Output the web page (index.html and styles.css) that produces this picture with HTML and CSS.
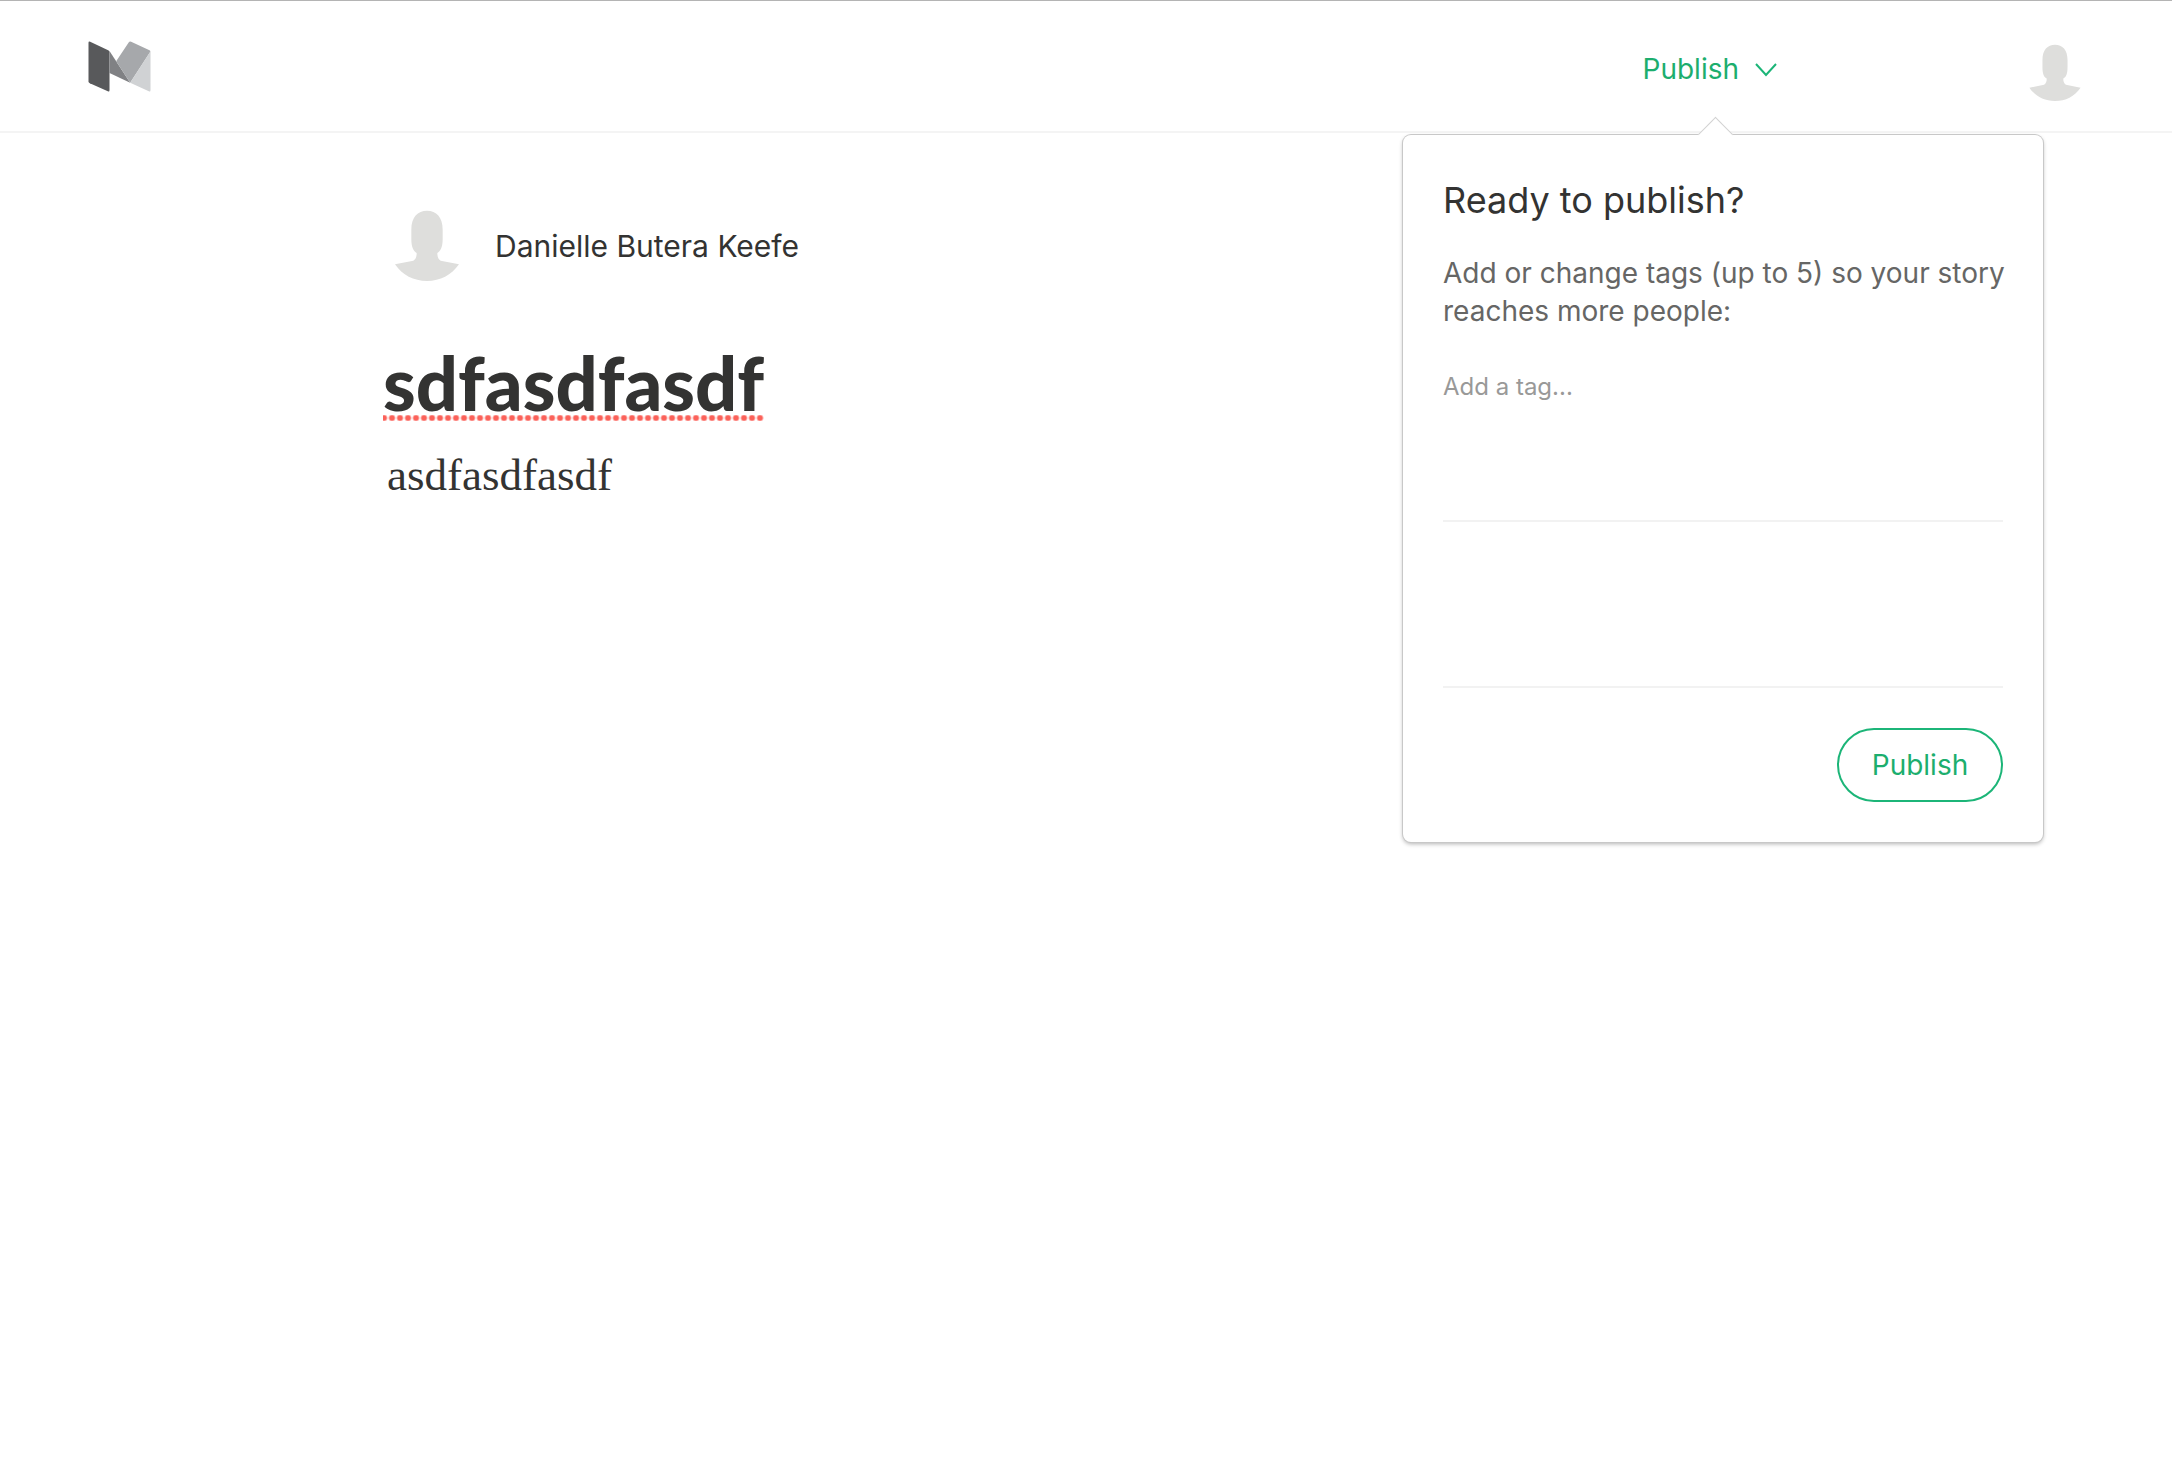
FILE: index.html
```html
<!DOCTYPE html>
<html lang="en">
<head>
  <meta charset="utf-8">
  <title>sdfasdfasdf</title>
  <meta name="viewport" content="width=device-width, initial-scale=1">
  <link rel="stylesheet" href="styles.css">
</head>
<body>
  <svg class="sprite" aria-hidden="true">
    <symbol id="person" viewBox="52 32 240 240">
      <path d="M125 118C125 80 144 61 172 61S219 80 219 118V146C219 172 212 183 203 188C203 200 206 207 213 211L268 222C245 255 212 272 172 272S98 255 76 222L131 211C138 207 141 200 141 188C132 183 125 172 125 146Z"/>
    </symbol>
  </svg>

  <header class="topbar">
    <a class="logo" href="#" aria-label="Home">
      <svg viewBox="56 61 188 153" aria-hidden="true">
        <path fill="#58595b" d="M57 66Q57 61 62 63L116 89Q120 91 120 95V209Q120 214 115 212L61 188Q57 186 57 182Z"/>
        <path fill="#808184" d="M120 91L182 186L120 157Z"/>
        <path fill="#a6a8ab" d="M178 65Q180 61 185 63L240 89Q244 91 242 94L182 186L140 122Z"/>
        <path fill="#d0d2d4" d="M243 92V209Q243 214 238 212L182 186Z"/>
      </svg>
    </a>
    <nav class="actions">
      <div class="publish-menu">
        <button class="menu-toggle" type="button" aria-expanded="true">
          Publish
          <svg class="chevron" viewBox="0 0 24 16" aria-hidden="true"><path d="M2 3L12 14L22 3"/></svg>
        </button>
        <form class="popover">
          <h2 class="popover-title">Ready to publish?</h2>
          <label class="popover-text" for="tag">Add or change tags (up to 5) so your story reaches more people:</label>
          <div class="tags"><input class="tag-input" id="tag" type="text" placeholder="Add a tag..."></div>
          <div class="options"></div>
          <button class="submit" type="button">Publish</button>
        </form>
      </div>
      <a href="#" class="profile" aria-label="Profile"><svg class="avatar" aria-hidden="true"><use href="#person"/></svg></a>
    </nav>
  </header>

  <main class="story">
    <div class="byline">
      <svg class="avatar avatar-large" aria-hidden="true"><use href="#person"/></svg>
      <span class="author">Danielle Butera Keefe</span>
    </div>
    <h1 class="story-title">sdfasdfasdf</h1>
    <p class="story-body">asdfasdfasdf</p>
  </main>
</body>
</html>
```

FILE: styles.css
```css
* { box-sizing: border-box; }

body {
  min-height: 100vh;
  margin: 0;
  background: #fff;
  color: #333332;
  font-family: Inter, "Liberation Sans", sans-serif;
}

h1, h2, p { margin: 0; }

button, input { font: inherit; }

.sprite { display: none; }

.topbar {
  display: flex;
  align-items: center;
  justify-content: space-between;
  height: 133px;
  padding: 0 85px 0 88px;
  border-top: 1px solid #b4b4b4;
  border-bottom: 2px solid #f4f4f4;
}

.logo svg { display: block; width: 63px; height: 51px; }

.actions {
  display: flex;
  align-items: center;
  gap: 245px;
  padding-top: 6px;
}

.profile { display: block; }

.avatar { display: block; width: 64px; height: 64px; fill: #dededc; }

.avatar-large { width: 80px; height: 80px; }

.publish-menu { position: relative; }

.menu-toggle {
  display: flex;
  align-items: center;
  gap: 15px;
  padding: 0;
  border: 0;
  background: none;
  color: #1cae6e;
  font-size: 28px;
  line-height: 36px;
  cursor: pointer;
}

.chevron {
  width: 24px;
  height: 16px;
  fill: none;
  stroke: #1cb578;
  stroke-width: 2;
}

.popover {
  position: absolute;
  top: 84px;
  right: -265px;
  display: flex;
  flex-direction: column;
  width: 640px;
  padding: 40px;
  border-radius: 8px;
  background: #fff;
  box-shadow: 0 0 0 1px #c8c8c8, 0 2px 4px rgba(0, 0, 0, 0.3);
}

.popover::before {
  content: "";
  position: absolute;
  top: -13px;
  left: 300px;
  width: 24px;
  height: 24px;
  border: solid #d2d2d2;
  border-width: 1px 0 0 1px;
  background: #fff;
  transform: rotate(45deg);
}

.popover-title {
  font-size: 36px;
  font-weight: 400;
  line-height: 50px;
}

.popover-text {
  margin: 29px -8px 0 0;
  color: #666665;
  font-size: 28px;
  line-height: 38px;
}

.tags {
  height: 192px;
  padding-top: 36px;
  border-bottom: 2px solid #f2f2f2;
}

.tag-input {
  width: 100%;
  height: 40px;
  padding: 0;
  border: 0;
  outline: 0;
  background: none;
  color: #333332;
  font-size: 24px;
}

.tag-input::placeholder { color: #999998; opacity: 1; }

.options {
  height: 166px;
  border-bottom: 2px solid #f2f2f2;
}

.submit {
  align-self: flex-end;
  width: 166px;
  height: 74px;
  margin-top: 40px;
  padding: 0;
  border: 2px solid #1cb578;
  border-radius: 37px;
  background: #fff;
  color: #1cae6e;
  font-size: 28px;
  cursor: pointer;
}

.story {
  max-width: 1398px;
  margin: 0 auto;
  padding-top: 68px;
}

.byline {
  display: flex;
  align-items: center;
  gap: 28px;
}

.author {
  padding-top: 10px;
  font-size: 30px;
  line-height: 40px;
}

.story-title {
  width: fit-content;
  margin: 69px 0 0 -4px;
  font-family: Lato, "Open Sans", sans-serif;
  font-size: 74px;
  font-weight: 900;
  line-height: 65px;
}

/* spelling marks under the title */
.story-title::after {
  content: "";
  display: block;
  height: 6px;
  background: radial-gradient(circle at 50% 50%, #fb6159 0, #fb6159 2px, #fb615900 4px) 5px 0 / 8px 6px repeat-x;
}

.story-body {
  margin-top: 24px;
  font-family: "Liberation Serif", serif;
  font-size: 45px;
  line-height: 60px;
}
```
